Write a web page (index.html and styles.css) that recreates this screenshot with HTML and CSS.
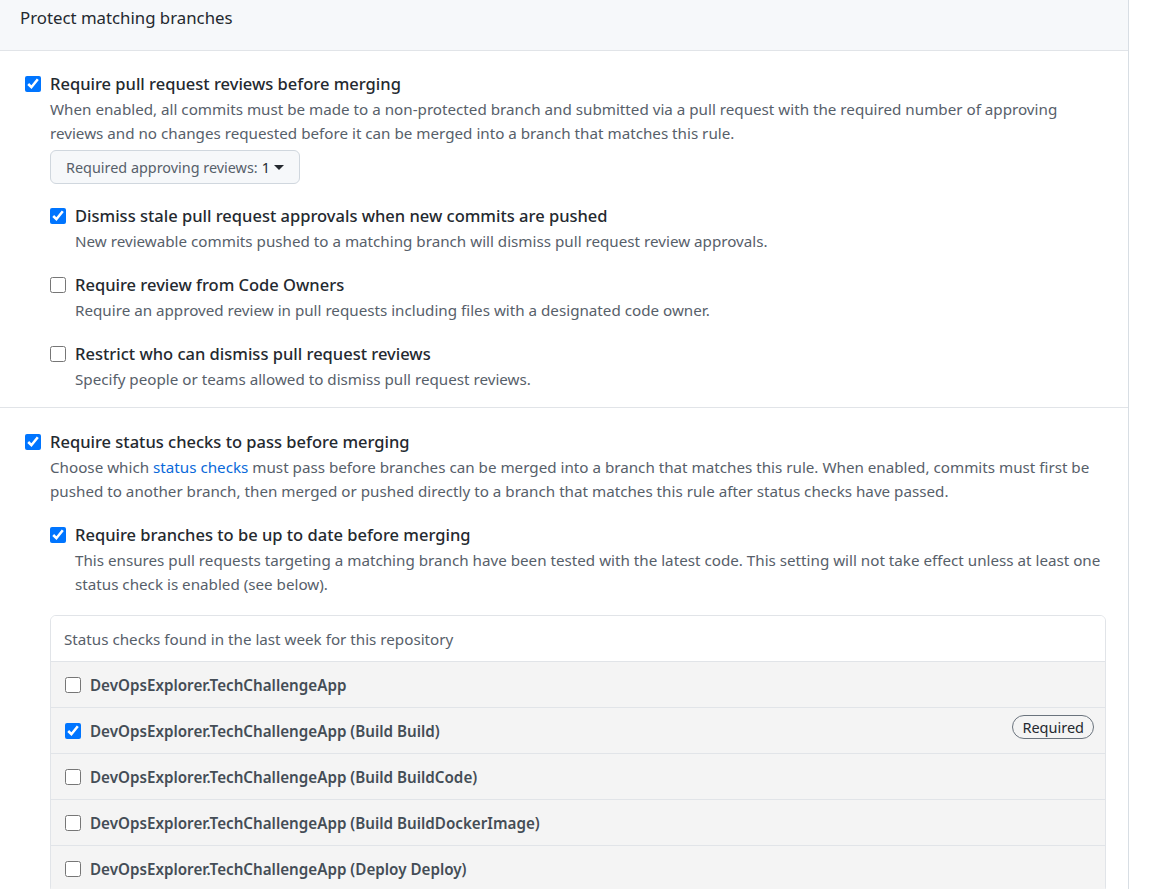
FILE: index.html
```html
<!DOCTYPE html>
<html>
<head>
<meta charset="utf-8">
<link rel="stylesheet" href="styles.css">
</head>
<body>
<div class="panel">
  <div class="panel-head">Protect matching branches</div>

  <section class="rule">
    <input type="checkbox" class="cb" checked>
    <div class="rule-body">
      <div class="title">Require pull request reviews before merging</div>
      <p class="desc">When enabled, all commits must be made to a non-protected branch and submitted via a pull request with the required number of approving reviews and no changes requested before it can be merged into a branch that matches this rule.</p>
      <button class="select">Required approving reviews: <span class="num">1</span><span class="caret"></span></button>

      <div class="sub first">
        <input type="checkbox" class="cb" checked>
        <div>
          <div class="title">Dismiss stale pull request approvals when new commits are pushed</div>
          <p class="desc">New reviewable commits pushed to a matching branch will dismiss pull request review approvals.</p>
        </div>
      </div>
      <div class="sub">
        <input type="checkbox" class="cb">
        <div>
          <div class="title">Require review from Code Owners</div>
          <p class="desc">Require an approved review in pull requests including files with a designated code owner.</p>
        </div>
      </div>
      <div class="sub">
        <input type="checkbox" class="cb">
        <div>
          <div class="title">Restrict who can dismiss pull request reviews</div>
          <p class="desc">Specify people or teams allowed to dismiss pull request reviews.</p>
        </div>
      </div>
    </div>
  </section>

  <section class="rule">
    <input type="checkbox" class="cb" checked>
    <div class="rule-body">
      <div class="title">Require status checks to pass before merging</div>
      <p class="desc">Choose which <a href="#" class="link">status checks</a> must pass before branches can be merged into a branch that matches this rule. When enabled, commits must first be pushed to another branch, then merged or pushed directly to a branch that matches this rule after status checks have passed.</p>

      <div class="sub first">
        <input type="checkbox" class="cb" checked>
        <div>
          <div class="title">Require branches to be up to date before merging</div>
          <p class="desc">This ensures pull requests targeting a matching branch have been tested with the latest code. This setting will not take effect unless at least one status check is enabled (see below).</p>
        </div>
      </div>

      <div class="checks">
        <div class="checks-head">Status checks found in the last week for this repository</div>
        <div class="check-row"><input type="checkbox" class="cb"><span class="check-name">DevOpsExplorer.TechChallengeApp</span></div>
        <div class="check-row"><input type="checkbox" class="cb" checked><span class="check-name">DevOpsExplorer.TechChallengeApp (Build Build)</span><span class="badge">Required</span></div>
        <div class="check-row"><input type="checkbox" class="cb"><span class="check-name">DevOpsExplorer.TechChallengeApp (Build BuildCode)</span></div>
        <div class="check-row"><input type="checkbox" class="cb"><span class="check-name">DevOpsExplorer.TechChallengeApp (Build BuildDockerImage)</span></div>
        <div class="check-row"><input type="checkbox" class="cb"><span class="check-name">DevOpsExplorer.TechChallengeApp (Deploy Deploy)</span></div>
      </div>
    </div>
  </section>
</div>
</body>
</html>
```

FILE: styles.css
```css
* { box-sizing: border-box; }

html, body {
  margin: 0;
  background: #ffffff;
}

body {
  font-family: "Noto Sans", "Open Sans", "Liberation Sans", sans-serif;
  color: #24292f;
  overflow: hidden;
}

.panel {
  width: 1129px;
  border-right: 1px solid #d8dee4;
  min-height: 889px;
}

.panel-head {
  height: 51px;
  background: #f6f8fa;
  border-bottom: 1px solid #e1e4e8;
  padding: 6px 20px 0;
  font-size: 16.8px;
  line-height: 24px;
  color: #24292f;
}

.rule {
  display: flex;
  gap: 9px;
  padding: 21px 0 16px 25px;
  border-bottom: 1px solid #e1e4e8;
}

.rule + .rule {
  padding-top: 22px;
}

.cb {
  width: 16px;
  height: 16px;
  margin: 4px 0 0;
  flex: none;
}

.rule-body {
  flex: 1;
  padding-right: 22px;
}

.title {
  font-size: 16.5px;
  line-height: 24px;
  font-weight: 500;
  color: #24292f;
}

.desc {
  margin: 1px 0 0;
  font-size: 15.2px;
  line-height: 24px;
  color: #57606a;
}

.link {
  color: #0969da;
  text-decoration: none;
}

.select {
  display: inline-flex;
  align-items: center;
  margin-top: 5px;
  height: 34px;
  padding: 0 15px;
  font-family: inherit;
  font-size: 14.4px;
  color: #57606a;
  background: #f6f8fa;
  border: 1px solid #d0d7de;
  border-radius: 6px;
}

.select .num {
  color: #24292f;
  margin-left: 4px;
}

.caret {
  width: 0;
  height: 0;
  margin-left: 4px;
  border-left: 5px solid transparent;
  border-right: 5px solid transparent;
  border-top: 5px solid #24292f;
}

.sub {
  display: flex;
  gap: 9px;
  margin-top: 20px;
}

.sub.first {
  margin-top: 20px;
}

.checks {
  margin-top: 19px;
  width: 1056px;
  border: 1px solid #e1e4e8;
  border-radius: 6px;
  overflow: hidden;
}

.checks-head {
  height: 46px;
  padding: 0 13px;
  display: flex;
  align-items: center;
  font-size: 15.2px;
  color: #57606a;
  background: #ffffff;
  border-bottom: 1px solid #e1e4e8;
}

.check-row {
  display: flex;
  align-items: center;
  gap: 9px;
  height: 46px;
  padding: 0 11px 0 14px;
  background: #f4f4f4;
  border-bottom: 1px solid #e1e4e8;
}

.check-row .cb {
  margin: 0;
}

.check-name {
  flex: 1;
  font-size: 15.2px;
  font-weight: 600;
  color: #444d56;
}

.badge {
  align-self: flex-start;
  margin-top: 7px;
  height: 24px;
  padding: 0 9px;
  display: inline-flex;
  align-items: center;
  font-size: 14.5px;
  color: #24292f;
  border: 1px solid #6a737d;
  border-radius: 12px;
}
```
